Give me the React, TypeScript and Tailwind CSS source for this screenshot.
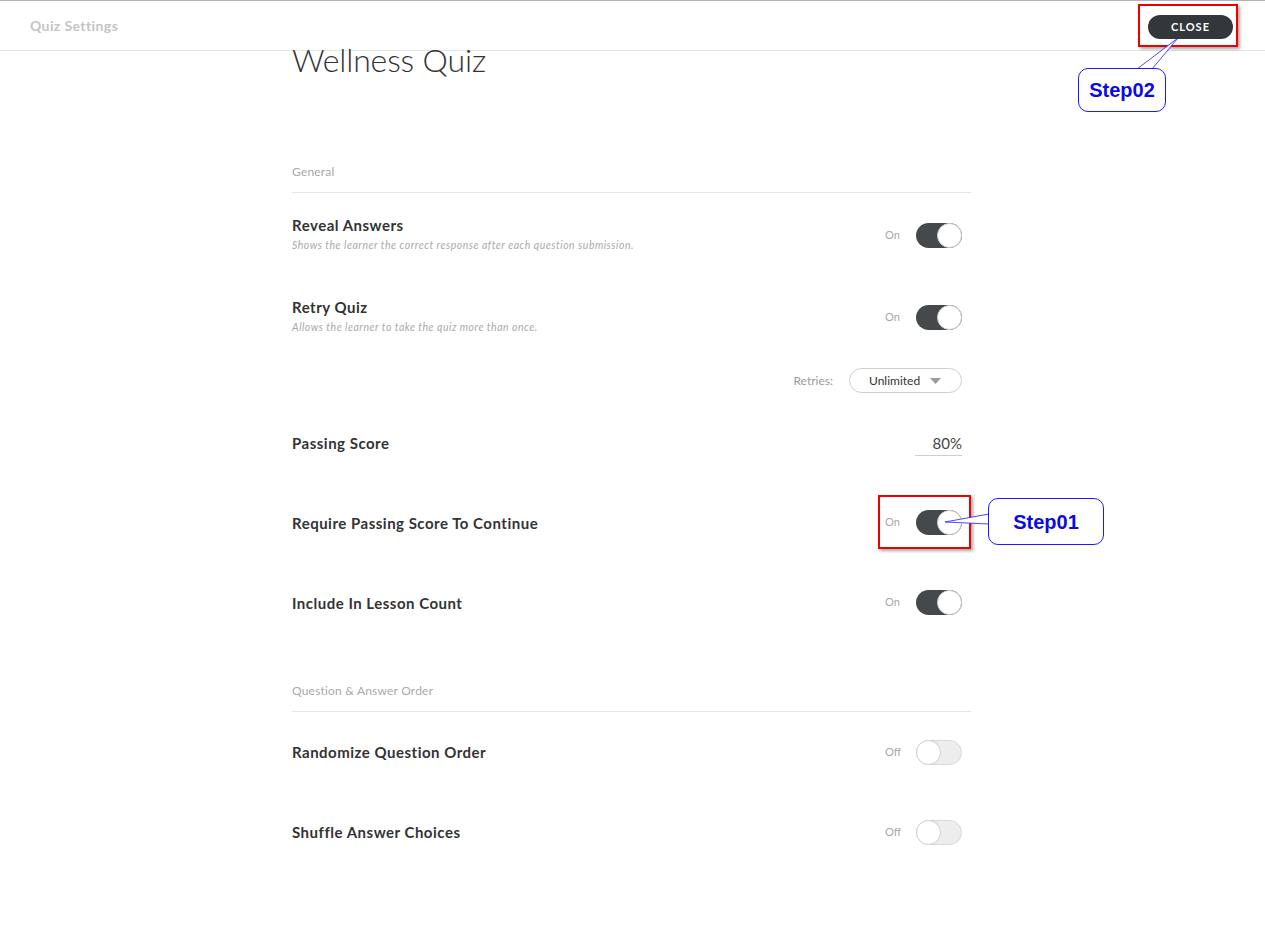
import React from 'react';

const font = { fontFamily: 'Lato, "Open Sans", sans-serif' };

const Toggle: React.FC<{ on: boolean }> = ({ on }) => (
  <div className="flex items-center gap-[15px]">
    <span className="text-[11px] text-[#a8a8a8] w-[16px]">{on ? 'On' : 'Off'}</span>
    {on ? (
      <div className="relative w-[46px] h-[25px] rounded-full bg-[#45494c]">
        <div className="absolute right-0 top-0 w-[25px] h-[25px] rounded-full bg-white border border-[#cfcfcf]" />
      </div>
    ) : (
      <div className="relative w-[46px] h-[25px] rounded-full bg-[#ededed] border border-[#d8d8d8]">
        <div className="absolute -left-px -top-px w-[25px] h-[25px] rounded-full bg-white border border-[#cfcfcf]" />
      </div>
    )}
  </div>
);

interface RowProps {
  title: string;
  desc?: string;
  h: string;
  children: React.ReactNode;
}

const Row: React.FC<RowProps> = ({ title, desc, h, children }) => (
  <div className={`flex items-center justify-between pr-[9px] ${h}`}>
    <div>
      <div className="text-[15px] leading-5 font-bold tracking-[0.5px] text-[#333]">{title}</div>
      {desc && <div className="text-[10.5px] leading-5 italic tracking-[0.5px] text-[#aaa]">{desc}</div>}
    </div>
    {children}
  </div>
);

const SectionLabel: React.FC<{ label: string; mt: string }> = ({ label, mt }) => (
  <div className={`${mt} pb-[12px] border-b border-[#e6e6e6] text-[12px] leading-4 tracking-[0.2px] text-[#a9a9a9]`}>{label}</div>
);

const Callout: React.FC<{ text: string; className: string }> = ({ text, className }) => (
  <div
    className={`absolute flex items-center justify-center rounded-[10px] border-[1.5px] border-[#1a1aff] bg-white text-[#0a0ae6] font-bold text-[20px] ${className}`}
    style={{ fontFamily: '"Liberation Sans", Arial, sans-serif' }}
  >
    {text}
  </div>
);

export default function App() {
  return (
    <div className="relative min-h-[928px] bg-white" style={font}>
      {/* header */}
      <div className="h-[51px] border-t border-t-[#b3b3b3] border-b border-b-[#e6e6e6] flex items-center justify-between pl-[30px] pr-[32px]">
        <span className="text-[14px] font-bold tracking-[0.4px] text-[#c4c4c4]">Quiz Settings</span>
        <button className="mt-[3px] h-[24px] w-[85px] rounded-full bg-[#33373a] text-white text-[11px] font-bold tracking-[1px]">
          CLOSE
        </button>
      </div>

      {/* content */}
      <div className="ml-[292px] w-[679px]">
        <h1 className="text-[32px] leading-[18px] font-light tracking-[-0.15px] text-[#333]">Wellness Quiz</h1>

        <SectionLabel label="General" mt="mt-[95px]" />

        <Row title="Reveal Answers" desc="Shows the learner the correct response after each question submission." h="h-[84px]">
          <Toggle on />
        </Row>
        <Row title="Retry Quiz" desc="Allows the learner to take the quiz more than once." h="h-[80px]">
          <Toggle on />
        </Row>
        <div className="flex items-center justify-end gap-[16px] pr-[9px] h-[47px]">
          <span className="text-[12px] text-[#9a9a9a]">Retries:</span>
          <div className="w-[113px] h-[25px] rounded-full border border-[#cfcfcf] flex items-center pl-[19px] pr-[20px] justify-between">
            <span className="text-[12px] text-[#333]">Unlimited</span>
            <svg width="11" height="6" viewBox="0 0 11 6">
              <path d="M0 0 L11 0 L5.5 6 Z" fill="#9a9a9a" />
            </svg>
          </div>
        </div>
        <Row title="Passing Score" h="h-[78px]">
          <div className="w-[47px] border-b border-[#cfcfcf] text-right text-[15px] leading-5 pt-[2px] pb-[2px] text-[#444]">80%</div>
        </Row>
        <Row title="Require Passing Score To Continue" h="h-[81px]">
          <Toggle on />
        </Row>
        <Row title="Include In Lesson Count" h="h-[79px]">
          <Toggle on />
        </Row>

        <SectionLabel label="Question & Answer Order" mt="mt-[41px]" />

        <Row title="Randomize Question Order" h="h-[80px]">
          <Toggle on={false} />
        </Row>
        <Row title="Shuffle Answer Choices" h="h-[80px]">
          <Toggle on={false} />
        </Row>
      </div>

      {/* annotations */}
      <div className="absolute left-[1138px] top-[4px] w-[100px] h-[43px] border-2 border-[#ee0000] shadow-[2px_2px_3px_rgba(0,0,0,0.35)]" />
      <div className="absolute left-[878px] top-[495px] w-[93px] h-[54px] border-2 border-[#ee0000] shadow-[2px_2px_3px_rgba(0,0,0,0.35)]" />

      <svg className="absolute left-0 top-0 pointer-events-none" width="1265" height="928">
        <path d="M1137 69 L1178 38 L1152 69 Z" fill="#ffffff" stroke="#1a1aff" strokeWidth="0.8" />
        <path d="M989 514 L945 522 L989 524 Z" fill="#ffffff" stroke="#1a1aff" strokeWidth="0.8" />
      </svg>

      <Callout text="Step02" className="left-[1078px] top-[68px] w-[88px] h-[44px]" />
      <Callout text="Step01" className="left-[988px] top-[498px] w-[116px] h-[47px]" />
    </div>
  );
}
